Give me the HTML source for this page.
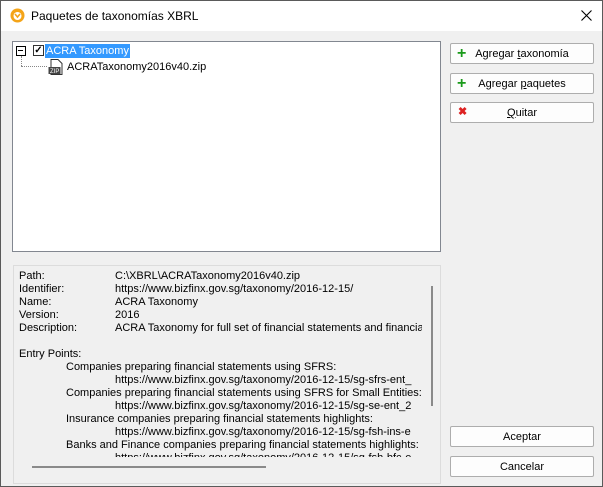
<!DOCTYPE html>
<html><head><style>
body{margin:0;width:603px;height:487px;overflow:hidden;font-family:"Liberation Sans",sans-serif;font-size:11px;color:#000}
.win{position:absolute;left:0;top:0;width:601px;height:485px;border:1px solid #5a5a5a;background:#f0f0f0}
.title{position:absolute;left:0;top:0;width:601px;height:30px;background:#fff}
.abs{position:absolute}
.btn{position:absolute;left:449px;width:142px;height:19px;border:1px solid #adadad;border-radius:2px;background:#fdfdfd;text-align:center;line-height:21px;font-size:11px;overflow:hidden}
.btn span{line-height:19px;top:0}
.ln{position:absolute;white-space:nowrap;line-height:13px}
</style></head><body>
<div class="win">
<div class="title">
 <svg class="abs" style="left:9px;top:7px" width="15" height="15"><circle cx="7.5" cy="7.5" r="7" fill="#f4a418"/><circle cx="7.5" cy="8" r="4" fill="#fff"/><path d="M5 6 L7.5 9 L10 6" stroke="#f4a418" stroke-width="1.6" fill="none"/></svg>
 <div class="abs" style="left:30px;top:8px;font-size:12px">Paquetes de taxonomías XBRL</div>
 <svg class="abs" style="left:580px;top:9px" width="11" height="11"><path d="M.5 .5L10.5 10.5M10.5 .5L.5 10.5" stroke="#000" stroke-width="1.1"/></svg>
</div>
<div class="abs" style="left:11px;top:40px;width:427px;height:209px;background:#fff;border:1px solid #828790;overflow:hidden">
 <div class="abs" style="left:3px;top:4px;width:8px;height:8px;border:1px solid #000;background:#fff"></div>
 <div class="abs" style="left:5px;top:8px;width:5px;height:1px;background:#000"></div>
 <div class="abs" style="left:8px;top:14px;width:0;height:10px;border-left:1px dotted #888"></div>
 <div class="abs" style="left:8px;top:24px;width:26px;height:0;border-top:1px dotted #888"></div>
 <div class="abs" style="left:20px;top:3px;width:9px;height:9px;border:1px solid #333;background:#fff;font-size:10px;line-height:9px;text-align:center;font-weight:bold">✓</div>
 <div class="abs" style="left:32px;top:2px;width:84px;height:14px;background:#3399ff;color:#fff;line-height:14px;padding-left:1px">ACRA Taxonomy</div>
 <svg class="abs" style="left:35px;top:17px" width="16" height="16"><path d="M3 .5h7l4 4v11H3z" fill="#fff" stroke="#333"/><rect x=".5" y="8" width="12" height="7" fill="#444"/><text x="2" y="14" font-size="6" fill="#fff" font-family="Liberation Sans">ZIP</text></svg>
 <div class="abs" style="left:54px;top:18px;line-height:14px">ACRATaxonomy2016v40.zip</div>
</div>
<div class="btn" style="top:42px"><span style="position:absolute;left:6px;color:#1a9a1a;font-weight:bold;font-size:16px">+</span>Agregar <u>t</u>axonomía</div>
<div class="btn" style="top:72px"><span style="position:absolute;left:6px;color:#1a9a1a;font-weight:bold;font-size:16px">+</span>Agregar <u>p</u>aquetes</div>
<div class="btn" style="top:101px"><span style="position:absolute;left:7px;color:#d22;font-weight:bold;font-size:11px">✖</span><u>Q</u>uitar</div>
<div class="btn" style="top:425px">Aceptar</div>
<div class="btn" style="top:455px">Cancelar</div>
<div class="abs" style="left:12px;top:264px;width:426px;height:217px;border:1px solid #dcdcdc;overflow:hidden">
 <div class="abs" style="left:0;top:0;width:408px;height:191px;overflow:hidden">
 <div class="ln" style="left:5px;top:4px">Path:</div><div class="ln" style="left:101px;top:4px">C:\XBRL\ACRATaxonomy2016v40.zip</div>
 <div class="ln" style="left:5px;top:17px">Identifier:</div><div class="ln" style="left:101px;top:17px">https://www.bizfinx.gov.sg/taxonomy/2016-12-15/</div>
 <div class="ln" style="left:5px;top:30px">Name:</div><div class="ln" style="left:101px;top:30px">ACRA Taxonomy</div>
 <div class="ln" style="left:5px;top:43px">Version:</div><div class="ln" style="left:101px;top:43px">2016</div>
 <div class="ln" style="left:5px;top:56px">Description:</div><div class="ln" style="left:101px;top:56px">ACRA Taxonomy for full set of financial statements and financial</div>
 <div class="ln" style="left:5px;top:82px">Entry Points:</div>
 <div class="ln" style="left:52px;top:95px">Companies preparing financial statements using SFRS:</div>
 <div class="ln" style="left:101px;top:108px">https://www.bizfinx.gov.sg/taxonomy/2016-12-15/sg-sfrs-ent_</div>
 <div class="ln" style="left:52px;top:121px">Companies preparing financial statements using SFRS for Small Entities:</div>
 <div class="ln" style="left:101px;top:134px">https://www.bizfinx.gov.sg/taxonomy/2016-12-15/sg-se-ent_2</div>
 <div class="ln" style="left:52px;top:147px">Insurance companies preparing financial statements highlights:</div>
 <div class="ln" style="left:101px;top:160px">https://www.bizfinx.gov.sg/taxonomy/2016-12-15/sg-fsh-ins-e</div>
 <div class="ln" style="left:52px;top:173px">Banks and Finance companies preparing financial statements highlights:</div>
 <div class="ln" style="left:101px;top:186px">https://www.bizfinx.gov.sg/taxonomy/2016-12-15/sg-fsh-bfc-e</div>
 </div>
 <div class="abs" style="left:417px;top:20px;width:2px;height:120px;background:#8a8a8a"></div>
 <div class="abs" style="left:18px;top:200px;width:234px;height:2px;background:#8a8a8a"></div>
</div>
</div>
</body></html>
